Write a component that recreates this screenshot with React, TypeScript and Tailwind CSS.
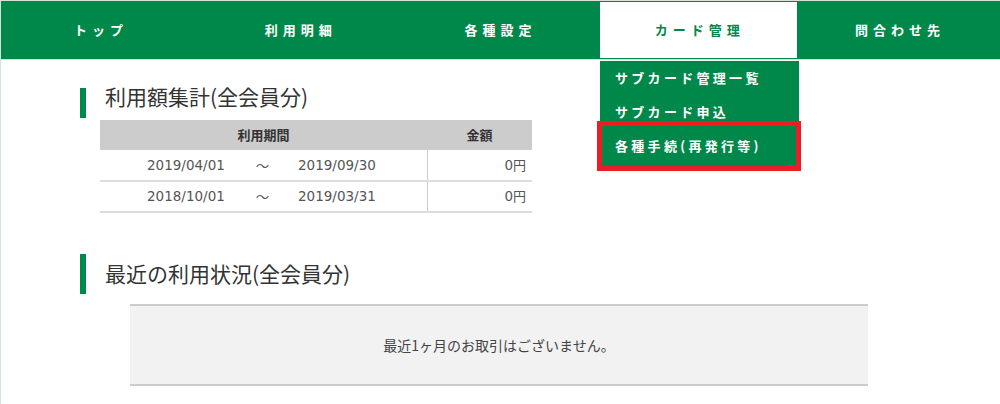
import React from 'react';

const navItems = ['トップ', '利用明細', '各種設定', 'カード管理', '問合わせ先'];
const subItems = ['サブカード管理一覧', 'サブカード申込', '各種手続(再発行等)'];

const rows = [
  { from: '2019/04/01', to: '2019/09/30', amount: '0円' },
  { from: '2018/10/01', to: '2019/03/31', amount: '0円' },
];

export default function App() {
  return (
    <div
      className="relative w-[1000px] h-[404px] overflow-hidden bg-white border-t border-l border-[#d5e3da]"
      style={{ fontFamily: '"Noto Sans CJK JP", "Noto Sans", sans-serif' }}
    >
      {/* global nav */}
      <nav className="grid grid-cols-5 h-[59px] bg-[#00884a] border-b border-[#cfe3d7]">
        {navItems.map((item) => {
          const active = item === 'カード管理';
          return (
            <div
              key={item}
              className={
                active
                  ? 'flex items-center justify-center bg-white my-[1px] mr-[3px] text-[#00884a] text-[13px] font-bold tracking-[5px]'
                  : 'flex items-center justify-center text-white text-[13px] font-bold tracking-[5px]'
              }
            >
              <span className={active ? 'pl-[2px]' : ''}>{item}</span>
            </div>
          );
        })}
      </nav>

      {/* dropdown */}
      <ul className="absolute left-[599px] top-[60px] w-[199px] bg-[#00884a] pb-[4px]">
        {subItems.map((s) => (
          <li
            key={s}
            className="h-[34px] flex items-center pl-[15px] text-white text-[13px] font-bold tracking-[3.3px]"
          >
            {s}
          </li>
        ))}
      </ul>
      <div className="absolute left-[596px] top-[120px] w-[204px] h-[50px] border-[5px] border-[#ee1c25]" />

      {/* main */}
      <main className="pt-[28px]">
        <section>
          <div className="flex ml-[79px]">
            <div className="w-[6px] h-[30px] bg-[#00884a]" />
            <h2 className="ml-[19px] -mt-[2px] text-[21px] leading-[20px] text-[#333]">利用額集計(全会員分)</h2>
          </div>
          <table className="ml-[99px] mt-[2px] w-[432px] border-collapse">
            <thead>
              <tr className="bg-[#cccccc] h-[30px] text-[13px] font-bold text-[#333]">
                <th className="w-[327px] font-bold">利用期間</th>
                <th className="font-bold">金額</th>
              </tr>
            </thead>
            <tbody
              className="text-[13.5px]"
              style={{ fontFamily: '"DejaVu Sans", "Noto Sans CJK JP", sans-serif' }}
            >
              {rows.map((r) => (
                <tr key={r.from} className="h-[31px] border-b-2 border-[#dddddd] text-[#555]">
                  <td className="border-r border-[#cccccc]">
                    <div className="flex items-center">
                      <span className="w-[80px] ml-[47px]">{r.from}</span>
                      <span className="w-[71px] text-center" style={{ fontFamily: '"Noto Sans CJK JP", sans-serif' }}>～</span>
                      <span>{r.to}</span>
                    </div>
                  </td>
                  <td className="text-right pr-[6px]">
                    0<span style={{ fontFamily: '"Noto Sans CJK JP", sans-serif' }} className="text-[13px]">円</span>
                  </td>
                </tr>
              ))}
            </tbody>
          </table>
        </section>

        <section className="mt-[41px]">
          <div className="flex items-center ml-[79px]">
            <div className="w-[6px] h-[40px] bg-[#00884a]" />
            <h2 className="ml-[19px] -mt-[3px] text-[21px] leading-[20px] text-[#333]">最近の利用状況(全会員分)</h2>
          </div>
          <div className="ml-[129px] mt-[10px] w-[738px] h-[82px] bg-[#f2f2f2] border-y-2 border-[#cccccc] flex items-center justify-center text-[14px] text-[#444]">
            最近1ヶ月のお取引はございません。
          </div>
        </section>
      </main>
    </div>
  );
}
